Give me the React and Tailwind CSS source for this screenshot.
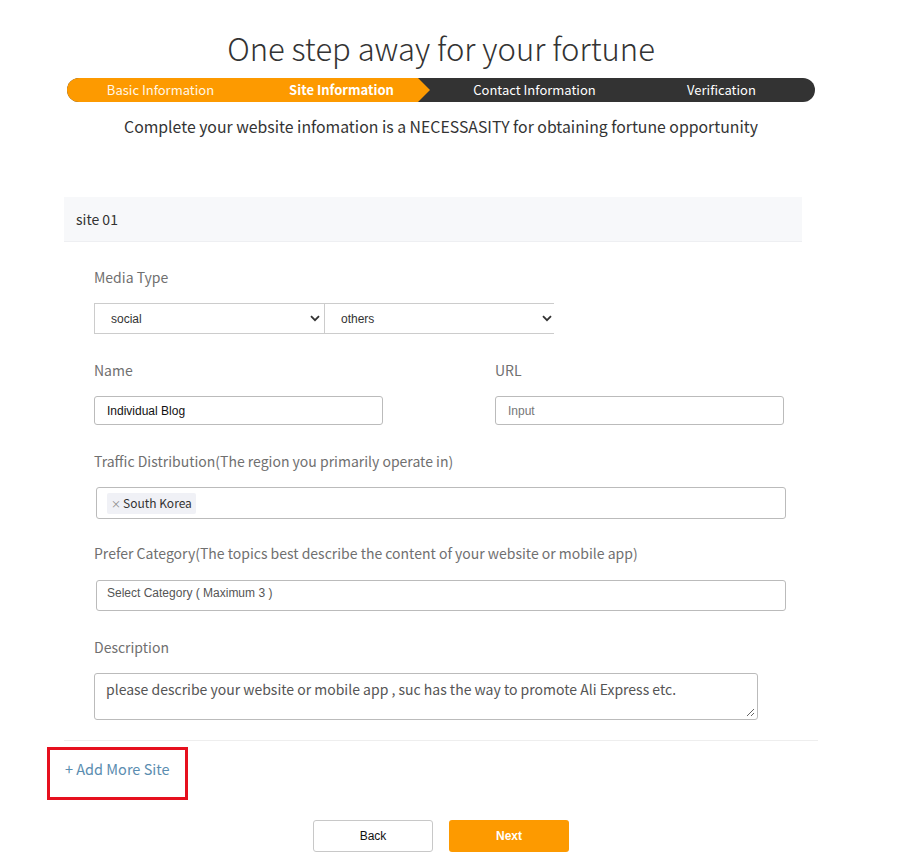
import React from "react";

const sans = "font-['Noto_Sans_CJK_KR','Noto_Sans',sans-serif]";
const arial = "font-['Liberation_Sans',Arial,sans-serif]";

function Chevron() {
  return (
    <svg width="10" height="7" viewBox="0 0 10 7" className="shrink-0">
      <path d="M1 1.2 L5 5.2 L9 1.2" fill="none" stroke="#333" strokeWidth="1.8" />
    </svg>
  );
}

function Label({ children, className = "" }) {
  return (
    <div className={`h-[20px] leading-[20px] text-[14px] text-[#707070] ${sans} ${className}`}>{children}</div>
  );
}

export default function App() {
  return (
    <div className="w-[917px] h-[862px] bg-white overflow-hidden">
      <div className="ml-[64px] w-[754px] pt-[28px]">
        <h1 className={`text-center text-[31px] leading-[40px] font-light text-[#333] ${sans}`}>
          One step away for your fortune
        </h1>

        <div className="mt-[10px] mx-[3px] h-[24px] rounded-full overflow-hidden bg-[#333] relative">
          <div className="absolute left-0 top-0 h-full w-[363px] bg-[#fd9a00] [clip-path:polygon(0_0,351px_0,363px_50%,351px_100%,0_100%)]" />
          <div className={`relative grid grid-cols-4 h-full text-[13px] leading-[24px] text-white ${sans}`}>
            <div className="text-center text-[#fff7e6]">Basic Information</div>
            <div className="text-center font-bold pr-[12px]">Site Information</div>
            <div className="text-center">Contact Information</div>
            <div className="text-center">Verification</div>
          </div>
        </div>

        <p className={`mt-[13px] text-center text-[15.8px] leading-[24px] text-[#333] ${sans}`}>
          Complete your website infomation is a NECESSASITY for obtaining fortune opportunity
        </p>

        <div className="mt-[58px] w-[738px] h-[45px] bg-[#f7f8fa] border-b border-[#eeeff2] flex items-center pl-[12px]">
          <span className={`text-[14px] text-[#333] ${sans}`}>site 01</span>
        </div>

        <div className="pl-[30px]">
          <Label className="mt-[25px]">Media Type</Label>
          <div className={`mt-[16px] flex text-[12px] text-[#333] ${arial}`}>
            <div className="w-[231px] h-[31px] border border-[#ccc] flex items-center justify-between pl-[16px] pr-[4px]">
              <span>social</span>
              <Chevron />
            </div>
            <div className="w-[229px] h-[31px] border-y border-[#ccc] flex items-center justify-between pl-[16px] pr-[2px]">
              <span>others</span>
              <Chevron />
            </div>
          </div>

          <div className="mt-[26px] flex gap-[112px]">
            <div className="w-[289px]">
              <Label>Name</Label>
              <div className={`mt-[16px] h-[29px] border border-[#bbb] rounded-[3px] flex items-center pl-[12px] text-[12px] text-[#111] ${arial}`}>
                Individual Blog
              </div>
            </div>
            <div className="w-[289px]">
              <Label>URL</Label>
              <div className={`mt-[16px] h-[29px] border border-[#bbb] rounded-[3px] flex items-center pl-[12px] text-[12px] text-[#777] ${arial}`}>
                Input
              </div>
            </div>
          </div>

          <Label className="mt-[26px]">Traffic Distribution(The region you primarily operate in)</Label>
          <div className="mt-[16px] ml-[2px] w-[690px] h-[32px] border border-[#bbb] rounded-[3px] flex items-center pl-[10px]">
            <span className={`h-[21px] px-[4px] bg-[#f0f1f6] rounded-[2px] flex items-center text-[12px] text-[#333] ${sans}`}>
              <span className="text-[10px] text-[#888] mr-[2px]">×</span>South Korea
            </span>
          </div>

          <Label className="mt-[24px]">Prefer Category(The topics best describe the content of your website or mobile app)</Label>
          <div className={`mt-[17px] ml-[2px] w-[690px] h-[31px] border border-[#bbb] rounded-[3px] pl-[10px] pt-[4px] text-[12px] leading-[16px] text-[#555] ${arial}`}>
            Select Category ( Maximum 3 )
          </div>

          <Label className="mt-[26px]">Description</Label>
          <div className={`mt-[16px] w-[664px] h-[47px] border border-[#bbb] rounded-[3px] relative pl-[11px] pt-[5px] text-[14px] leading-[20px] text-[#555] ${sans}`}>
            please describe your website or mobile app , suc has the way to promote Ali Express etc.
            <svg width="9" height="9" viewBox="0 0 9 9" className="absolute right-[2px] bottom-[2px]">
              <path d="M8 1 L1 8 M8 5 L5 8" stroke="#666" strokeWidth="1" />
            </svg>
          </div>
        </div>

        <div className="mt-[20px] h-px bg-[#eeeeee]" />

        <div className="mt-[6px] ml-[-17px] w-[141px] h-[53px] border-[3px] border-[#e6101e] pl-[15px] pt-[7px]">
          <span className={`text-[14.5px] leading-[20px] text-[#5b8db0] ${sans}`}>+ Add More Site</span>
        </div>

        <div className={`mt-[20px] flex justify-center gap-[16px] text-[12px] ${arial}`}>
          <button className="w-[120px] h-[32px] border border-[#c8c8c8] rounded-[3px] bg-white text-[#111]">Back</button>
          <button className="w-[120px] h-[32px] rounded-[3px] bg-[#fd9a00] text-white font-bold">Next</button>
        </div>
      </div>
    </div>
  );
}
